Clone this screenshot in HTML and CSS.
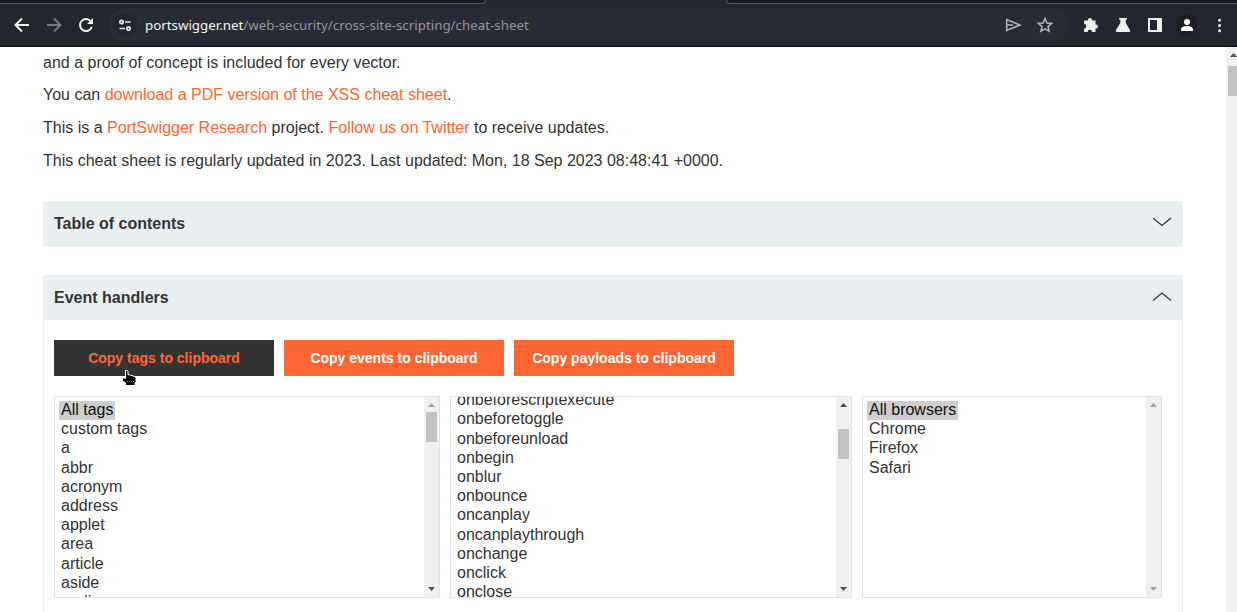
FILE: index.html
```html
<!DOCTYPE html>
<html lang="en">
<head>
<meta charset="utf-8">
<title>Cross-site scripting (XSS) cheat sheet</title>
<link rel="stylesheet" href="styles.css">
</head>
<body>
<header class="chrome">
  <div class="tabs"><span class="tab tab-left"></span><span class="tab tab-right"></span></div>
  <nav class="toolbar">
    <svg class="nav-icons" width="108" height="34" viewBox="0 0 108 34" fill="none" stroke-width="2">
      <path d="M29 17H16M22 10.5L15.500 17L22 23.500" stroke="#f0f0ec"/>
      <path d="M47 17H60M54 10.500L60.500 17L54 23.500" stroke="#77787c"/>
      <path d="M91 13.700A6 6 0 1 0 91.700 19" stroke="#f0f0ec"/>
      <path d="M93 10v6h-6z" fill="#f0f0ec"/>
    </svg>
    <div class="address">
      <span class="site-info"><svg width="14" height="12" viewBox="0 0 14 12" fill="none" stroke="#e8e9ea" stroke-width="1.700"><circle cx="3.500" cy="3" r="1.700"/><path d="M7 3h5.500M1.500 9.500H7"/><circle cx="10.500" cy="9.500" r="1.700"/></svg></span>
      <span class="url"><b>portswigger.net</b>/web-security/cross-site-scripting/cheat-sheet</span>
      <svg class="address-icons" width="70" height="34" viewBox="-6 0 70 34" fill="none" stroke="#b7b8b9" stroke-width="1.500">
        <path d="M-4.300 11.500V22.500L9 17ZM-4 17H2" stroke-linejoin="miter"/>
        <path d="M34 10.500L35.900 15L40.700 15.400L37 18.600L38.100 23.300L34 20.800L29.900 23.300L31 18.600L27.300 15.400L32.100 15Z"/>
      </svg>
    </div>
    <svg class="tools" width="168" height="34" viewBox="0 0 168 34" fill="#f0f0ec">
      <path d="M15.300 12.500h3.700v-.5a2 2 0 0 1 4 0v.5h3.500v4h.5a2 2 0 0 1 0 4h-.5V24h-3.500a2.200 2.200 0 0 0-4.400 0h-3.500v-3.500a2.200 2.200 0 0 0 0-4.400z"/>
      <path d="M50 10h8v1.500h-1.200V15l4.300 7.200q.7 1.800-1 1.800H48q-1.700 0-1.100-1.800L51.300 15v-3.500H50z"/>
      <path fill-rule="evenodd" d="M79 10h14v14H79zM81 12v10h7V12z"/>
      <circle cx="118" cy="17" r="11" fill="#1f2022"/>
      <circle cx="118" cy="14" r="3" fill="#fff"/><path d="M112 23v-1.500Q112 18 118 18T124 21.500V23z" fill="#fff"/>
      <circle cx="150.500" cy="12.300" r="1.500"/><circle cx="150.500" cy="17.500" r="1.500"/><circle cx="150.500" cy="22.700" r="1.500"/>
    </svg>
  </nav>
</header>
<div class="viewport">
  <main class="content">
    <section class="intro">
      <p>and a proof of concept is included for every vector.</p>
      <p>You can <a>download a PDF version of the XSS cheat sheet</a>.</p>
      <p>This is a <a>PortSwigger Research</a> project. <a>Follow us on Twitter</a> to receive updates.</p>
      <p>This cheat sheet is regularly updated in 2023. Last updated: Mon, 18 Sep 2023 08:48:41 +0000.</p>
    </section>
    <h2 class="section-head toc">Table of contents <svg width="20" height="10" viewBox="0 0 20 10"><path d="M1 1L10 8.500L19 1"/></svg></h2>
    <h2 class="section-head">Event handlers <svg width="20" height="10" viewBox="0 0 20 10"><path d="M1 8.500L10 1L19 8.500"/></svg></h2>
    <section class="panel">
      <div class="buttons">
        <button class="button active">Copy tags to clipboard</button>
        <button class="button">Copy events to clipboard</button>
        <button class="button">Copy payloads to clipboard</button>
        <svg class="cursor" width="16" height="17" viewBox="0 0 16 17"><path d="M3.500 .5h2l.5 1V5l1.500-.3 1 .8 1.500-.2 1 .8 1.500.2 1.500 1.500v4l-1 1.200V15.500H3.500V13L1.500 11.500 .5 10.500V8H2.500L3.500 8.500V1z" fill="#000" stroke="#fff" stroke-width="1"/><path d="M5 11.500h8" stroke="#888" stroke-dasharray="1 1"/></svg>
      </div>
      <div class="lists">
        <div class="list tags">
          <ul><li class="selected">All tags</li><li>custom tags</li><li>a</li><li>abbr</li><li>acronym</li><li>address</li><li>applet</li><li>area</li><li>article</li><li>aside</li><li>audio</li></ul>
          <div class="scroll"><i class="up muted"></i><span class="thumb"></span><i class="down"></i></div>
        </div>
        <div class="list events">
          <ul><li>onbeforescriptexecute</li><li>onbeforetoggle</li><li>onbeforeunload</li><li>onbegin</li><li>onblur</li><li>onbounce</li><li>oncanplay</li><li>oncanplaythrough</li><li>onchange</li><li>onclick</li><li>onclose</li></ul>
          <div class="scroll"><i class="up"></i><span class="thumb"></span><i class="down"></i></div>
        </div>
        <div class="list browsers">
          <ul><li class="selected">All browsers</li><li>Chrome</li><li>Firefox</li><li>Safari</li></ul>
          <div class="scroll"><i class="up muted"></i><i class="down muted"></i></div>
        </div>
      </div>
    </section>
  </main>
  <div class="page-scroll"><i class="up"></i><span class="thumb"></span></div>
</div>
</body>
</html>
```
FILE: styles.css
```css
* { box-sizing: border-box; }
body { margin: 0; height: 612px; overflow: hidden; background: #fff; color: #333332; font: 16px/24px "Liberation Sans", Arial, sans-serif; }
.chrome { height: 47px; background: #23252f; border-bottom: 1px solid #08090b; }
.tabs { height: 8px; display: flex; justify-content: space-between; align-items: flex-start; }
.tab { height: 4px; background: #17181b; border-bottom: 1px solid #56575b; }
.tab-left { width: 486px; border-right: 1px solid #56575b; border-bottom-right-radius: 4px; }
.tab-right { width: 511px; border-left: 1px solid #56575b; border-bottom-left-radius: 4px; }
.toolbar { display: flex; height: 34px; }
.nav-icons { flex: none; }
.address { width: 961px; height: 34px; flex: none; border-radius: 17px; background: #282a36; display: flex; align-items: center; padding-left: 5px; }
.site-info { width: 24px; height: 24px; border-radius: 50%; background: #23252d; display: flex; align-items: center; justify-content: center; }
.url { margin-left: 8px; font: 13.333px/20px "Noto Sans", sans-serif; color: #96989c; white-space: nowrap; }
.url b { font-weight: 400; color: #f5f5f5; }
.address-icons { margin-left: auto; margin-right: -6px; }
.tools { flex: none; }
.viewport { display: flex; height: 565px; }
.content { width: 1226px; padding: 0 43px; overflow: hidden; }
.page-scroll { width: 11px; background: #f0f0f0; padding: 6px 0 0 2px; overflow: hidden; display: flex; flex-direction: column; }
.intro { padding-top: 3.700px; height: 154px; }
.intro p { margin: 0 0 8.700px; }
a { color: #ff6633; }
.section-head { margin: 0; height: 45px; padding: 0 11px; display: flex; align-items: center; justify-content: space-between; background: #eaeff2; font-size: 16px; line-height: 24px; }
.section-head svg { fill: none; stroke: #333; stroke-width: 1.200; margin-top: -2px; }
.toc { height: 46px; margin-bottom: 28px; }
.toc svg { margin-top: -4px; }
.panel { height: 292px; padding: 20px 10px 0; border: solid #e9eff2; border-width: 0 1px; }
.buttons { display: flex; gap: 10px; height: 36px; position: relative; }
.button { width: 220px; height: 36px; padding: 0; border: 0; background: #ff6633; color: #fff; font: bold 14px/20px "Liberation Sans", Arial, sans-serif; }
.button.active { background: #333332; color: #ff6633; }
.cursor { position: absolute; left: 68px; top: 30px; }
.lists { display: flex; gap: 10px; margin-top: 20px; }
.list { height: 202px; border: 1px solid #e3e3e3; display: flex; justify-content: space-between; overflow: hidden; }
.tags { width: 386px; }
.events { width: 402px; }
.browsers { width: 300px; }
.list ul { margin: 0; padding: 4px 4px 0; list-style: none; }
.events ul { padding-top: 0; margin-top: -5.800px; }
.list li { height: 19.200px; line-height: 17px; padding: 0 2px; white-space: nowrap; width: max-content; }
.list .selected { background: #cecece; color: #101010; }
.scroll { width: 15px; flex: none; background: #f0f0f0; padding: 6px 2px 6px; display: flex; flex-direction: column; }
.up, .down { width: 7px; height: 4px; background: #505050; clip-path: polygon(50% 0, 100% 100%, 0 100%); margin-left: 2px; flex: none; }
.down { clip-path: polygon(0 0, 100% 0, 50% 100%); margin-top: auto; }
.muted { background: #a3a3a3; }
.thumb { width: 11px; height: 30px; background: #c1c1c1; margin-top: 5px; flex: none; }
.events .thumb { margin-top: 22px; }
.page-scroll .thumb { margin-top: 9px; }
```
